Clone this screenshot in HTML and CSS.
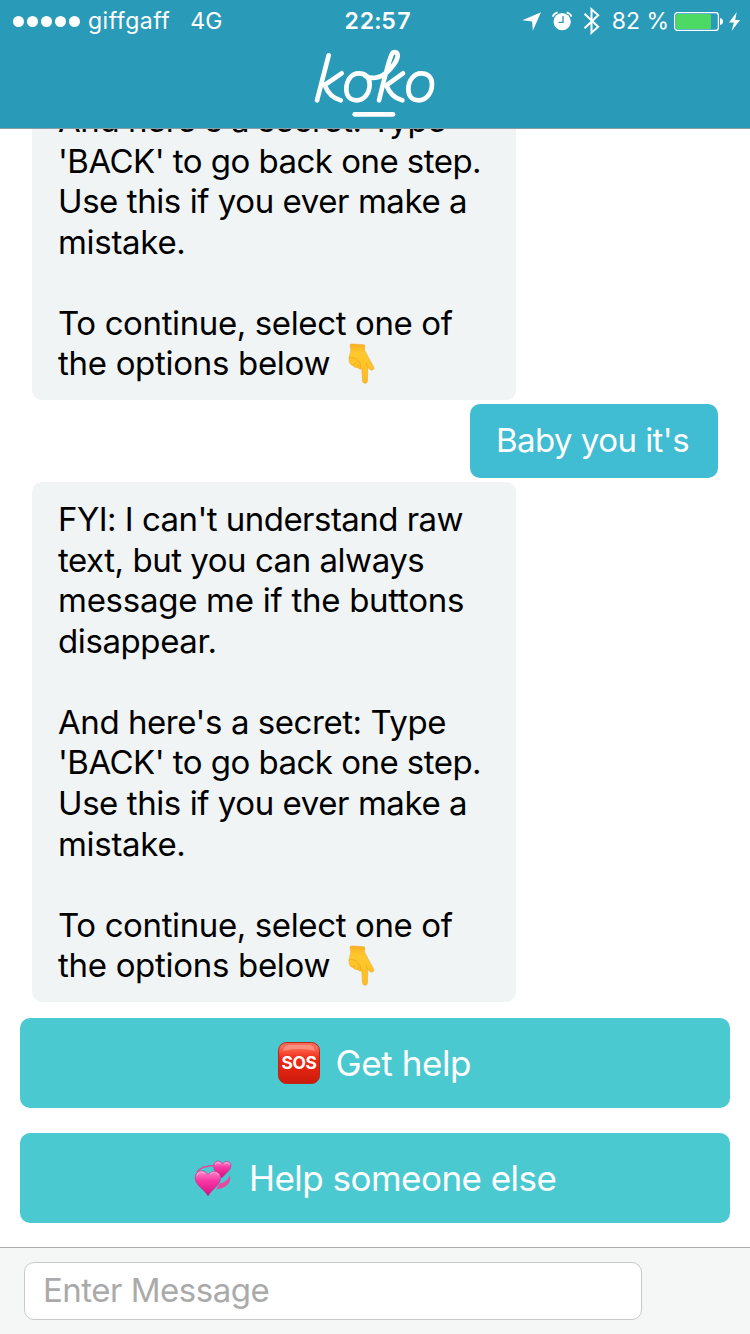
FILE: index.html
```html
<!DOCTYPE html>
<html lang="en">
<head>
<meta charset="utf-8">
<title>Koko</title>
<link rel="stylesheet" href="styles.css">
</head>
<body>
<svg class="defs" width="0" height="0" aria-hidden="true">
  <defs>
    <linearGradient id="skin" x1="0" y1="0" x2="0" y2="1"><stop offset="0" stop-color="#f8b01e"/><stop offset=".25" stop-color="#ffc92e"/><stop offset="1" stop-color="#fdbb22"/></linearGradient>
    <linearGradient id="red" x1="0" y1="0" x2="0" y2="1"><stop offset="0" stop-color="#fa6a55"/><stop offset=".12" stop-color="#fb6b55"/><stop offset=".38" stop-color="#f22b15"/><stop offset="1" stop-color="#cb1b0c"/></linearGradient>
    <linearGradient id="pink" x1="0" y1="0" x2="0" y2="1"><stop offset="0" stop-color="#fb86c8"/><stop offset=".4" stop-color="#f736a5"/><stop offset="1" stop-color="#d80f83"/></linearGradient>
    <symbol id="hand" viewBox="84 37 80 124">
      <path d="M89 43Q91 39 98 40L129 42Q136 42 134 48Q131 59 138 67L145 81L160 108Q164 115 159 118Q154 121 149 117L143 110L142 152Q142 159 135 159Q128 159 127 152L125 116Q117 118 112 111Q103 113 98 105Q89 104 87 93Q84 83 89 70Q94 58 89 43Z" fill="url(#skin)" stroke="#eda21b" stroke-width="1.5"/>
      <path d="M88 82Q95 77 100 83Q108 81 111 91L119 96Q123 103 121 113M98 104Q104 103 104 98M112 111Q118 109 116 103M143 110Q136 108 139 98" fill="none" stroke="#eaa21c" stroke-width="2" stroke-linecap="round"/>
    </symbol>
  </defs>
</svg>
<div class="phone">
  <header class="topbar">
    <div class="status">
      <div class="status-left">
        <div class="signal"><i></i><i></i><i></i><i></i><i></i></div>
        <span class="carrier">giffgaff</span>
        <span class="network">4G</span>
      </div>
      <span class="clock">22:57</span>
      <div class="status-right">
        <svg class="i-loc" viewBox="64 34 58 58"><path d="M122 35L97 91L95 63L65 59Z" fill="#fff"/></svg>
        <svg class="i-alarm" viewBox="157 30 60 60"><circle cx="187.500" cy="62" r="26" fill="#fff"/><path d="M159 47Q162 37 174 34M216 47Q213 37 201 34" fill="none" stroke="#fff" stroke-width="5"/><path d="M190 45V64H177" fill="none" stroke="#2a9ab9" stroke-width="4"/></svg>
        <svg class="i-bt" viewBox="250 20 50 84"><path d="M254 40L295 79L275 97V27L295 45L254 84" fill="none" stroke="#fff" stroke-width="6"/></svg>
        <span class="percent">82 %</span>
        <svg class="i-batt" viewBox="0 0 49 19"><rect x=".6" y=".6" width="43.800" height="17.800" rx="3" fill="none" stroke="#fff" stroke-width="1.300"/><rect x="2" y="2" width="35" height="15" rx="1.500" fill="#4cd964"/><path d="M46 6Q49 6.500 49 9.500T46 13Z" fill="#fff"/></svg>
        <svg class="i-bolt" viewBox="686 32 34 58"><path d="M710 32L686 64H701L694 90L720 56H705Z" fill="#fff"/></svg>
      </div>
    </div>
    <svg class="logo" viewBox="40 140 372 216" fill="none" stroke="#fff" stroke-width="14" stroke-linecap="round" stroke-linejoin="round">
      <path d="M87 165L52 300M126 219L75 254Q89 291 123 300"/>
      <path d="M177 219C154 219 140 241 140 266C140 287 152 300 171 300C194 300 210 278 210 251C210 231 198 219 177 219"/>
      <path d="M196 226C214 237 239 234 258 219C279 202 293 180 294 167C295 155 282 151 276 162C264 190 250 252 238 300M310 219L260 255Q274 291 308 300"/>
      <path d="M364 219C342 219 326 242 326 267C326 288 338 300 357 300C380 300 397 278 397 251C397 231 385 219 364 219"/>
      <path d="M165 342H280"/>
    </svg>
  </header>

  <main class="chat">
    <div class="bubble incoming continued">
      <span class="line l5">And here's a secret: Type</span>
      <span class="line l6">'BACK' to go back one step.</span>
      <span class="line l7">Use this if you ever make a</span>
      <span class="line l8">mistake.</span>
      <span class="line"></span>
      <span class="line l9">To continue, select one of</span>
      <span class="line l10">the options below<svg class="hand"><use href="#hand"/></svg></span>
    </div>
    <div class="bubble outgoing"><span class="line l11">Baby you it's</span></div>
    <div class="bubble incoming">
      <span class="line l1">FYI: I can't understand raw</span>
      <span class="line l2">text, but you can always</span>
      <span class="line l3">message me if the buttons</span>
      <span class="line l4">disappear.</span>
      <span class="line"></span>
      <span class="line l5">And here's a secret: Type</span>
      <span class="line l6">'BACK' to go back one step.</span>
      <span class="line l7">Use this if you ever make a</span>
      <span class="line l8">mistake.</span>
      <span class="line"></span>
      <span class="line l9">To continue, select one of</span>
      <span class="line l10">the options below<svg class="hand"><use href="#hand"/></svg></span>
    </div>
  </main>

  <div class="options">
    <button class="option help">
      <svg class="sos" viewBox="0 0 42 42"><rect x=".5" y=".5" width="41" height="41" rx="8" fill="url(#red)" stroke="#b9271b"/><path d="M5 9Q6 3 11 3H31Q36 3 37 9Q21 5 5 9Z" fill="#fff" opacity=".25"/><text x="21" y="27.300" text-anchor="middle" textLength="35" lengthAdjust="spacingAndGlyphs" class="sos-text">SOS</text></svg>
      <span>Get help</span>
    </button>
    <button class="option someone">
      <svg class="hearts" viewBox="40 45 114 112"><path d="M45 81Q61 59 104 59V65Q69 64 52 80ZM149 91Q154 127 107 134L116 117Q139 112 149 91Z" fill="#e9489f"/><path d="M124 99C113 87 99 81 99 63C99 47 117 43 126 56C135 44 152 49 151 62C150 78 134 86 124 99Z" fill="url(#pink)" stroke="#c51a79" stroke-width="1.500"/><path d="M82 154C70 132 43 123 43 98C43 76 71 71 82 89C94 72 120 78 120 98C120 122 93 133 82 154Z" fill="url(#pink)" stroke="#c51a79" stroke-width="1.500"/><path d="M49 91Q57 77 72 85M90 86Q103 77 114 90M104 57Q111 50 119 56M132 56Q141 50 147 58" fill="none" stroke="#ffb4df" stroke-width="4" opacity=".6" stroke-linecap="round"/></svg>
      <span>Help someone else</span>
    </button>
  </div>

  <footer class="composer">
    <input class="message" type="text" placeholder="Enter Message">
  </footer>
</div>
</body>
</html>
```
FILE: styles.css
```css
* { box-sizing: border-box; }
body { margin: 0; background: #fff; font-family: Inter, "Liberation Sans", sans-serif; }
svg { display: block; flex: none; }
.defs { position: absolute; }
.phone { width: 750px; height: 1334px; display: flex; flex-direction: column; overflow: hidden; }

.topbar { flex: none; height: 129px; background: #2a9ab9; border-bottom: 1px solid #8a9da3; color: #fff; display: flex; flex-direction: column; align-items: center; }
.status { width: 100%; height: 40px; display: grid; grid-template-columns: 1fr auto 1fr; align-items: center; padding: 1px 10px 0 13px; font-size: 23px; line-height: 40px; white-space: nowrap; }
.status-left, .status-right { display: flex; align-items: center; }
.status-right { justify-content: flex-end; }
.signal { display: flex; gap: 3px; }
.signal i { width: 11px; height: 11px; border-radius: 50%; background: #fff; }
.carrier { margin-left: 8px; letter-spacing: 0.5px; }
.network { margin-left: 20px; }
.clock { font-weight: 600; font-size: 23px; letter-spacing: 0.4px; padding-left: 3px; font-feature-settings: "tnum"; }
.i-loc { width: 19px; height: 19px; margin-right: 11px; }
.i-alarm { width: 20px; height: 20px; margin-right: 11px; }
.i-bt { width: 17px; height: 28px; margin-right: 12px; }
.percent { letter-spacing: 0; margin-right: 5px; }
.i-batt { width: 49px; height: 19px; margin-right: 6px; }
.i-bolt { width: 11px; height: 19px; }
.logo { width: 124px; height: 72px; margin-top: 7px; }

.chat { flex: none; height: 873px; overflow: hidden; display: flex; flex-direction: column; justify-content: flex-end; gap: 4px; padding: 0 32px; }
.bubble { flex: none; border-radius: 10px; padding: 17px 26px 0; font-size: 33px; line-height: 40.580px; }
.incoming { align-self: flex-start; width: 484px; height: 520px; background: #f0f4f5; color: #000; }
.continued { height: 300px; padding-top: 0; padding-bottom: 16.040px; display: flex; flex-direction: column; justify-content: flex-end; border-radius: 0 0 10px 10px; }
.outgoing { align-self: flex-end; width: 248px; height: 74px; padding-top: 16px; background: #40bcd3; color: #fff; }
.line { display: flex; flex: none; align-items: center; height: 40.580px; white-space: nowrap; }
.l1 { letter-spacing: -0.54px; }
.l2 { letter-spacing: -0.47px; }
.l3 { letter-spacing: -0.27px; }
.l4 { letter-spacing: -0.4px; }
.l5 { letter-spacing: -0.44px; }
.l6 { letter-spacing: -0.53px; }
.l7 { letter-spacing: -0.43px; }
.l8 { letter-spacing: -0.3px; }
.l9 { letter-spacing: -0.38px; }
.l10 { letter-spacing: -0.3px; }
.l11 { letter-spacing: -0.54px; }
.hand { width: 27px; height: 41px; margin-left: 18px; }

.options { flex: none; display: flex; flex-direction: column; gap: 25px; padding: 16px 20px 0; height: 245px; }
.option { height: 90px; border: 0; border-radius: 10px; background: #4bc9d1; color: #fff; font: 400 35px/44px Inter, "Liberation Sans", sans-serif; display: flex; align-items: center; padding: 0; white-space: nowrap; }
.help { padding-left: 258px; gap: 15.500px; letter-spacing: -0.4px; }
.someone { padding-left: 173.500px; gap: 17.500px; letter-spacing: -0.53px; }
.sos { width: 42px; height: 42px; }
.sos-text { font-family: Inter, sans-serif; font-size: 17.500px; font-weight: 700; fill: #fff; }
.hearts { width: 38px; height: 37px; }

.composer { flex: 1; background: #f5f7f7; border-top: 1px solid #a9adae; padding: 14px 24px; }
.message { display: block; width: 618px; height: 58px; border: 1px solid #c6c8ca; border-radius: 10px; background: #fff; padding: 0 18px 2px; font: 400 33px/40px Inter, "Liberation Sans", sans-serif; letter-spacing: -0.5px; outline: 0; }
.message::placeholder { color: #aaa; opacity: 1; }
```
